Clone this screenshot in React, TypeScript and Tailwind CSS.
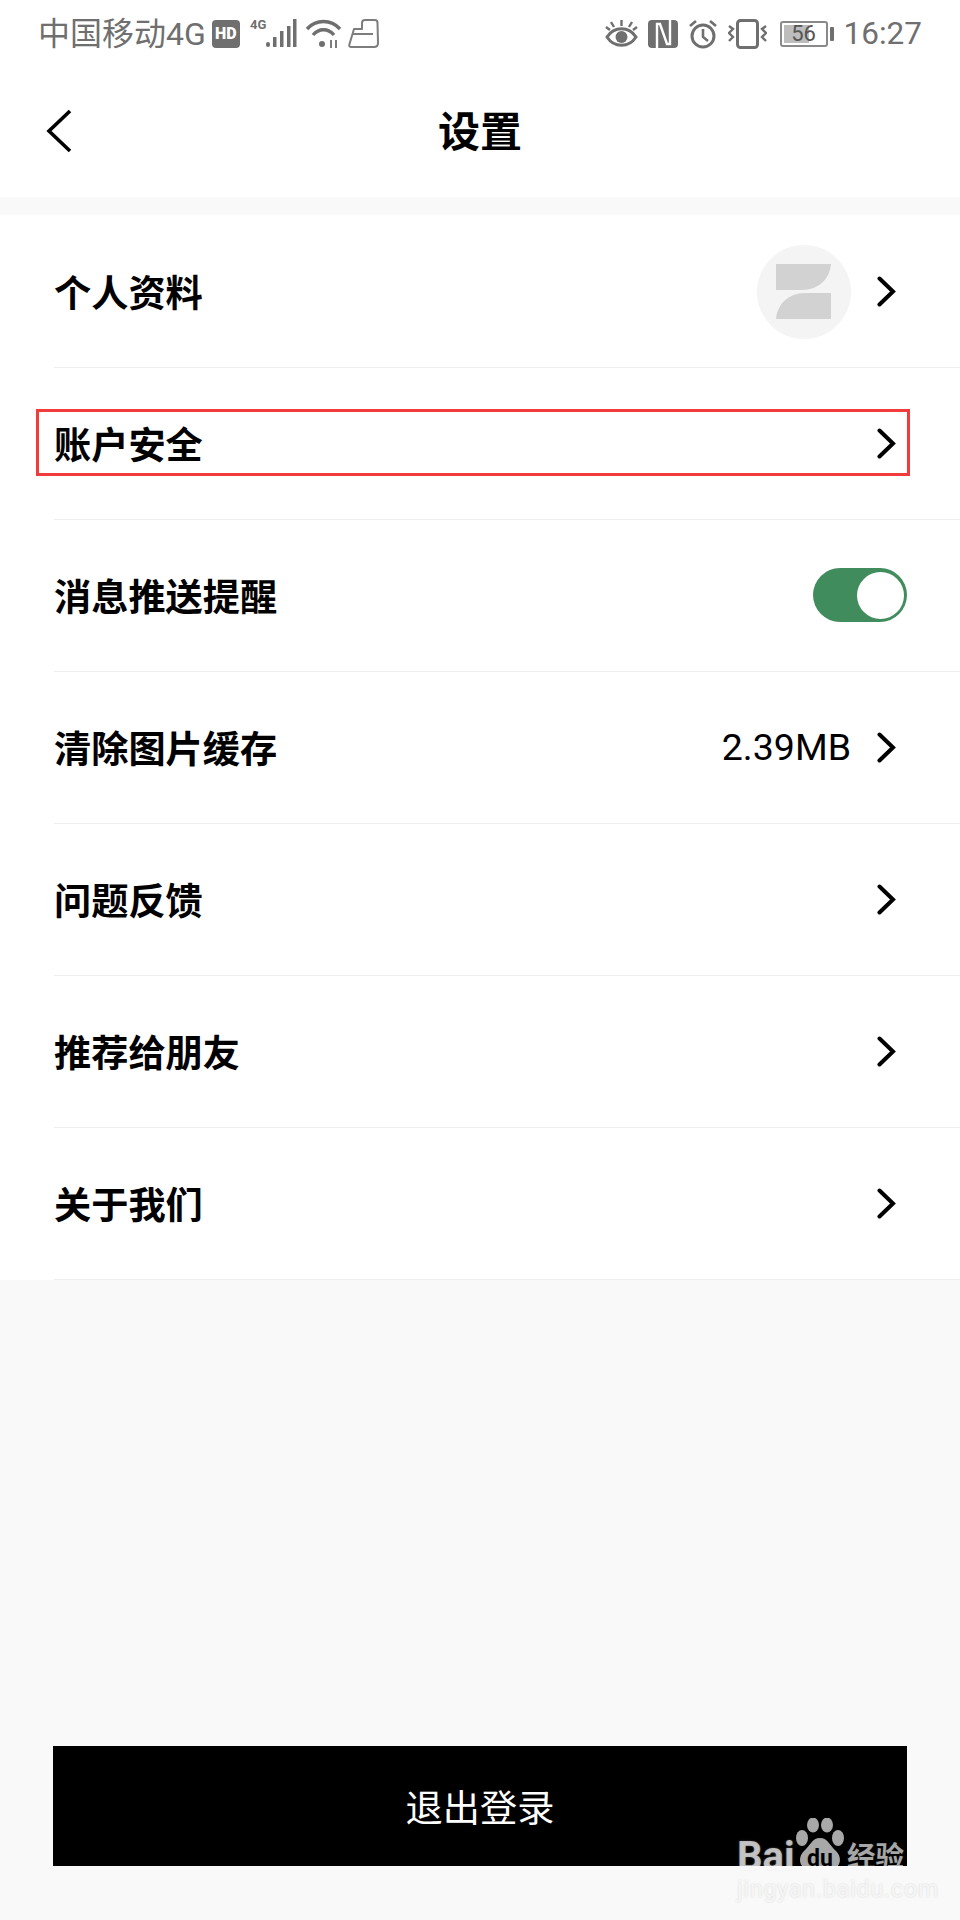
import React from "react";

const font = { fontFamily: '"Roboto", "Noto Sans CJK SC", sans-serif' };

function Chevron() {
  return (
    <svg width="19" height="31" viewBox="0 0 19 31" fill="none" className="shrink-0">
      <path d="M2.5 2.5 L16 15.5 L2.5 28.5" stroke="#000" strokeWidth="4" strokeLinecap="round" strokeLinejoin="miter" />
    </svg>
  );
}

function Toggle() {
  return (
    <div className="w-[94px] h-[54px] rounded-full bg-[#418c5c] flex items-center justify-end pr-[3px] mr-[-11px] mt-[-1px]">
      <div className="w-[47px] h-[47px] rounded-full bg-white" />
    </div>
  );
}

function Avatar() {
  return (
    <div className="w-[94px] h-[94px] rounded-full bg-[#f4f4f4] flex items-center justify-center">
      <svg width="56" height="56" viewBox="0 0 56 56">
        <path d="M0 0 H55 C54 14 43 26 26 26 H0 Z" fill="#d2d2d2" />
        <path d="M55 55 H0 C1 41 12 29 29 29 H55 Z" fill="#d2d2d2" />
      </svg>
    </div>
  );
}

function Row({ label, right, chevron = true, boxed = false }: { label: string; right?: React.ReactNode; chevron?: boolean; boxed?: boolean }) {
  return (
    <div className="relative pl-[54px]">
      <div className="h-[152px] pr-[64px] flex items-center justify-between border-b border-[#efefef]">
        <span className="text-[37.2px] font-bold text-black leading-none pt-[6px]">{label}</span>
        <div className="flex items-center gap-[26px]">
          {right}
          {chevron && <Chevron />}
        </div>
      </div>
      {boxed && <div className="absolute left-[36px] top-[41px] w-[874px] h-[67px] border-[3px] border-[#f23b3b]" />}
    </div>
  );
}

function StatusLeft() {
  return (
    <div className="flex items-center">
      <span className="text-[32px] text-[#6f6f6f] leading-none">中国移动4G</span>
      <div className="ml-[6px] w-[28px] h-[28px] rounded-[4px] bg-[#6f6f6f] flex items-center justify-center">
        <span className="text-[16px] font-black text-white leading-none">HD</span>
      </div>
      <svg width="48" height="32" viewBox="0 0 48 32" className="ml-[10px]">
        <text x="0" y="11" fontSize="13" fontWeight="700" fill="#6f6f6f" fontFamily="Roboto, sans-serif">4G</text>
        <rect x="16" y="24" width="4" height="5" rx="2" fill="#6f6f6f" />
        <rect x="23" y="19" width="3.5" height="10" fill="#6f6f6f" />
        <rect x="30" y="13" width="3.5" height="16" fill="#6f6f6f" />
        <rect x="37" y="8" width="3.5" height="21" fill="#6f6f6f" />
        <rect x="43" y="1" width="3.5" height="28" fill="#6f6f6f" />
      </svg>
      <svg width="36" height="30" viewBox="0 0 36 30" className="ml-[8px]" fill="none" stroke="#6f6f6f" strokeWidth="3.4">
        <path d="M1 10 C10 0 25 0 34 10" />
        <path d="M7 16 C13 9 22 9 28 16" />
        <circle cx="16" cy="25" r="3" fill="#6f6f6f" stroke="none" />
        <path d="M25 21 V29 M30 21 V29" strokeWidth="1.8" />
      </svg>
      <svg width="31" height="30" viewBox="0 0 31 30" className="ml-[6px]" fill="none" stroke="#7d7d7d" strokeWidth="2">
        <path d="M6 10 H14 V4 C14 2 15 1 17 1 H27 C29 1 29.5 2 29.5 4 L30 24 C30 27 28 28 26 28 H3 C1 28 1 27 1.5 25 Z" strokeLinejoin="round" />
        <path d="M5 15 H25" />
      </svg>
    </div>
  );
}

function StatusRight() {
  return (
    <div className="flex items-center">
      <svg width="33" height="30" viewBox="0 0 33 30" fill="none" stroke="#6f6f6f" strokeWidth="3">
        <path d="M2 18 C9 7 24 7 31 18 C24 29 9 29 2 18 Z" />
        <circle cx="16.5" cy="18" r="6" fill="#6f6f6f" stroke="none" />
        <path d="M16.5 1 V7 M6 3 L9 8 M27 3 L24 8 M1 8 L5 11 M32 8 L28 11" strokeWidth="2.4" />
      </svg>
      <svg width="30" height="30" viewBox="0 0 30 30" className="ml-[10px]">
        <rect x="0" y="1" width="30" height="28" rx="4" fill="#6f6f6f" />
        <path d="M9 29 V5 H12 L19 25 H22 V1" fill="none" stroke="#fff" strokeWidth="2.4" />
      </svg>
      <svg width="30" height="30" viewBox="0 0 30 30" className="ml-[10px]" fill="none" stroke="#6f6f6f" strokeWidth="3">
        <circle cx="15" cy="17" r="11" />
        <path d="M15 10 V18 L20 22" strokeWidth="2.6" />
        <path d="M2 7 L8 2 M28 7 L22 2" strokeWidth="2.6" />
      </svg>
      <svg width="39" height="30" viewBox="0 0 39 30" className="ml-[10px]" fill="none" stroke="#6f6f6f" strokeWidth="2.4">
        <rect x="9.5" y="1.5" width="20" height="27" rx="3" strokeWidth="3" />
        <path d="M1 7 L5 10 L1 14 L5 18 L1 22" />
        <path d="M38 7 L34 10 L38 14 L34 18 L38 22" />
      </svg>
      <div className="ml-[13px] relative w-[48px] h-[26px] rounded-[3px] border-2 border-[#8a8a8a] flex items-center p-[2px]">
        <div className="w-[25px] h-full bg-[#bdbdbd]" />
        <span className="absolute inset-0 flex items-center justify-center text-[22px] text-[#555] leading-none">56</span>
      </div>
      <div className="ml-[2px] w-[4px] h-[14px] rounded-[1px] bg-[#6f6f6f]" />
      <span className="ml-[10px] text-[31.5px] text-[#6f6f6f] leading-none">16:27</span>
    </div>
  );
}

function Watermark() {
  return (
    <div className="absolute left-[737px] top-[1818px] w-[172px] h-[82px] text-white/65 pointer-events-none">
      <span className="absolute left-0 top-[19px] text-[40px] font-bold leading-none [text-shadow:0_0_2px_rgba(210,210,210,0.4)]">Bai</span>
      <svg width="52" height="55" viewBox="0 0 52 55" className="absolute left-[57px] top-0" fill="#ffffff" fillOpacity="0.66">
        <ellipse cx="8" cy="20" rx="6" ry="8" />
        <ellipse cx="19" cy="7" rx="6" ry="7.5" />
        <ellipse cx="33" cy="7" rx="6" ry="7.5" />
        <ellipse cx="44" cy="20" rx="6" ry="8" />
        <path d="M26 20 C34 20 36 28 42 33 C50 41 45 53 34 52 C29 51 23 51 18 52 C7 53 2 41 10 33 C16 28 18 20 26 20 Z" />
      </svg>
      <span className="absolute left-[70px] top-[29px] text-[23px] font-bold leading-none text-black">du</span>
      <span className="absolute left-[110px] top-[26px] text-[28.5px] font-bold leading-none">经验</span>
      <span className="absolute left-0 top-[60px] text-[23px] leading-none tracking-[0.9px] text-white/70 [text-shadow:0_0_2px_rgba(190,190,190,0.6)]">jingyan.baidu.com</span>
    </div>
  );
}

export default function App() {
  return (
    <div className="relative w-[960px] h-[1920px] bg-[#f9f9f9] flex flex-col overflow-hidden" style={font}>
      <div className="bg-white h-[197px] shrink-0 flex flex-col">
        <div className="h-[66px] pl-[38px] pr-[38px] pt-[1px] flex items-center justify-between">
          <StatusLeft />
          <StatusRight />
        </div>
        <div className="relative flex-1 flex items-center justify-center">
          <svg width="28" height="44" viewBox="0 0 28 44" fill="none" className="absolute left-[46px] top-[43px]">
            <path d="M24 2 L3 22 L24 42" stroke="#000" strokeWidth="3.6" />
          </svg>
          <span className="text-[42px] font-bold text-black leading-none pt-[2px]">设置</span>
        </div>
      </div>
      <div className="mt-[18px] pt-[1px] bg-white shrink-0">
        <Row label="个人资料" right={<Avatar />} />
        <Row label="账户安全" boxed />
        <Row label="消息推送提醒" right={<Toggle />} chevron={false} />
        <Row label="清除图片缓存" right={<span className="text-[37.5px] text-black leading-none">2.39MB</span>} />
        <Row label="问题反馈" />
        <Row label="推荐给朋友" />
        <Row label="关于我们" />
      </div>
      <div className="flex-1 flex flex-col justify-end px-[53px] pb-[54px]">
        <button className="h-[120px] w-full bg-black text-white text-[37.2px] leading-none pt-[7px]">退出登录</button>
      </div>
      <Watermark />
    </div>
  );
}
